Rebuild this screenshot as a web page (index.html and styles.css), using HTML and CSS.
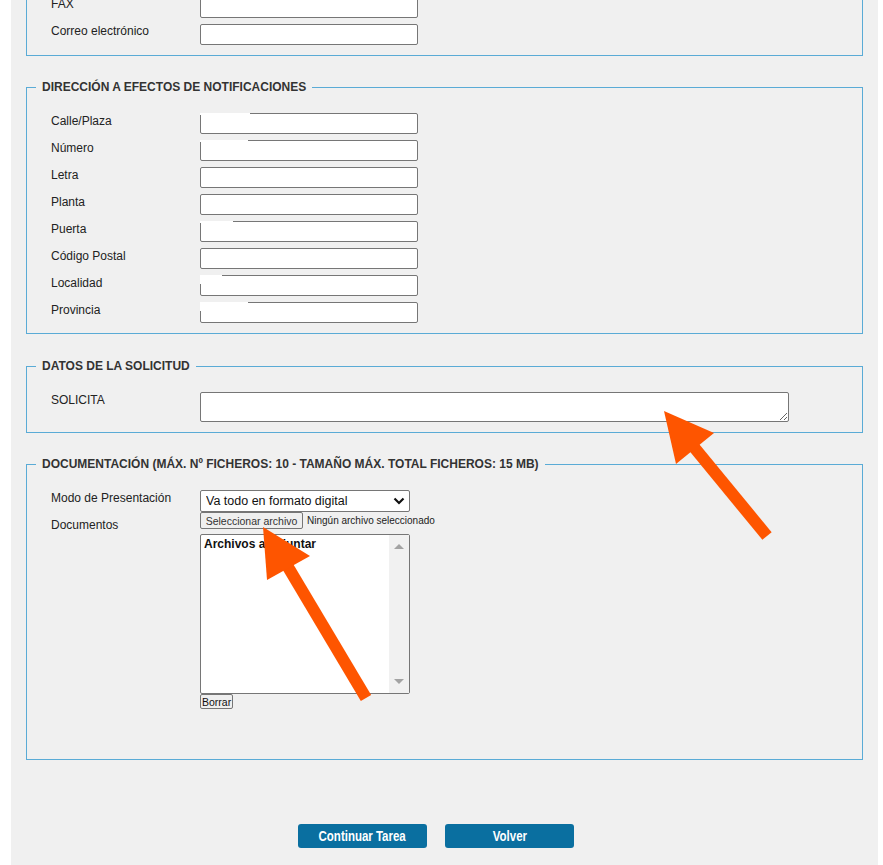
FILE: index.html
```html
<!DOCTYPE html>
<html lang="es">
<head>
<meta charset="utf-8">
<title>Solicitud</title>
<link rel="stylesheet" href="styles.css">
</head>
<body>
<div class="wrap">
  <div class="page">
    <fieldset class="box box-top">
      <div class="rows">
        <div class="row first"><label class="lbl lbl-top">FAX</label><input class="txt" type="text"></div>
        <div class="row"><label class="lbl lbl-top">Correo electrónico</label><input class="txt" type="text"></div>
      </div>
    </fieldset>

    <fieldset class="box">
      <legend class="leg">DIRECCIÓN A EFECTOS DE NOTIFICACIONES</legend>
      <div class="rows">
        <div class="row"><label class="lbl">Calle/Plaza</label><span class="field r50"><input class="txt" type="text"></span></div>
        <div class="row"><label class="lbl">Número</label><span class="field r48"><input class="txt" type="text"></span></div>
        <div class="row"><label class="lbl">Letra</label><span class="field"><input class="txt" type="text"></span></div>
        <div class="row"><label class="lbl">Planta</label><span class="field"><input class="txt" type="text"></span></div>
        <div class="row"><label class="lbl">Puerta</label><span class="field r33"><input class="txt" type="text"></span></div>
        <div class="row"><label class="lbl">Código Postal</label><span class="field"><input class="txt" type="text"></span></div>
        <div class="row"><label class="lbl">Localidad</label><span class="field r22 rl"><input class="txt" type="text"></span></div>
        <div class="row"><label class="lbl">Provincia</label><span class="field r48 rl"><input class="txt" type="text"></span></div>
      </div>
    </fieldset>

    <fieldset class="box box-gap">
      <legend class="leg">DATOS DE LA SOLICITUD</legend>
      <div class="rows">
        <div class="row row-auto"><label class="lbl">SOLICITA</label><textarea class="area"></textarea></div>
      </div>
    </fieldset>

    <fieldset class="box">
      <legend class="leg">DOCUMENTACIÓN (MÁX. Nº FICHEROS: 10 - TAMAÑO MÁX. TOTAL FICHEROS: 15 MB)</legend>
      <div class="rows rows-doc">
        <div class="row row-auto"><label class="lbl">Modo de Presentación</label>
          <span class="selwrap">
            <select class="sel"><option>Va todo en formato digital</option></select>
            <svg class="chev" width="12" height="8" viewBox="0 0 12 8" aria-hidden="true"><polyline points="1.5,1.5 6,6 10.5,1.5" fill="none" stroke="#111" stroke-width="2.2"/></svg>
          </span>
        </div>
        <div class="row row-auto row-docs"><label class="lbl lbl-docs">Documentos</label>
          <div class="docs">
            <div class="file"><button class="filebtn" type="button">Seleccionar archivo</button><span class="filetxt">Ningún archivo seleccionado</span></div>
            <div class="listbox">
              <div class="list-content">Archivos a adjuntar</div>
              <div class="sb"><span class="sb-up"></span><span class="sb-down"></span></div>
            </div>
            <button class="smallbtn" type="button">Borrar</button>
          </div>
        </div>
      </div>
    </fieldset>

    <div class="actions">
      <button class="btn" type="button"><span class="btn-txt">Continuar Tarea</span></button>
      <button class="btn" type="button"><span class="btn-txt">Volver</span></button>
    </div>
  </div>

  <svg class="overlay" width="883" height="865" viewBox="0 0 883 865" aria-hidden="true">
    <line x1="693" y1="446" x2="767" y2="536" stroke="#fe5500" stroke-width="12"/>
    <polygon points="664,411 714,433 676,464" fill="#fe5500"/>
    <line x1="288" y1="567" x2="366" y2="698" stroke="#fe5500" stroke-width="12"/>
    <polygon points="263,527 310,556 267,580" fill="#fe5500"/>
  </svg>
</div>
</body>
</html>
```
FILE: styles.css
```css
html, body {
  margin: 0;
  padding: 0;
  background: #ffffff;
}
body {
  font-family: "Liberation Sans", Arial, sans-serif;
  font-size: 12px;
  color: #222;
}
.wrap {
  position: relative;
  width: 883px;
  height: 865px;
  overflow: hidden;
}
.page {
  margin-left: 11px;
  width: 867px;
  min-height: 865px;
  background: #f0f0f0;
  box-sizing: border-box;
  padding-top: 0;
}
.box {
  margin: 24px 15px 0 15px;
  padding: 0;
  border: 1px solid #5aabd6;
  min-width: 0;
}
.box-gap {
  margin-top: 25px;
}
.box-top {
  margin-top: 0;
  border-top: 0;
}
.leg {
  margin-left: 9px;
  padding: 0 6px;
  font-weight: bold;
  font-size: 12px;
  color: #333;
  line-height: 14px;
}
.rows {
  padding: 19px 0 10px 24px;
}
.box-top .rows {
  padding-top: 0;
}
.row {
  display: flex;
  align-items: flex-start;
  height: 21px;
  margin-bottom: 6px;
}
.row:last-child {
  margin-bottom: 0;
}
.row.first {
  margin-top: -3px;
}
.row-auto {
  height: auto;
}
.lbl {
  width: 149px;
  flex: none;
  padding-top: 1px;
  line-height: 14px;
  font-size: 12px;
  color: #222;
}
.lbl-top {
  padding-top: 0;
}
.txt {
  box-sizing: border-box;
  width: 218px;
  height: 21px;
  margin: 0;
  border: 1px solid #767676;
  border-radius: 2px;
  background: #fff;
  padding: 1px 2px;
  font: 12px "Liberation Sans", Arial, sans-serif;
  display: block;
}
.field {
  position: relative;
  display: block;
}
.field::before {
  content: "";
  position: absolute;
  left: 0;
  top: 0;
  height: 2px;
  width: 0;
  background: #fff;
}
.field.rl::before {
  height: 9px;
}
.r50::before { width: 50px; }
.r48::before { width: 48px; }
.r33::before { width: 33px; }
.r22::before { width: 22px; }
.area {
  box-sizing: border-box;
  width: 589px;
  height: 30px;
  margin: 0;
  border: 1px solid #767676;
  border-radius: 2px;
  background: #fff;
  font: 12px "Liberation Sans", Arial, sans-serif;
  display: block;
}
.selwrap {
  position: relative;
  display: block;
  width: 210px;
  height: 22px;
}
.sel {
  -webkit-appearance: none;
  appearance: none;
  box-sizing: border-box;
  width: 210px;
  height: 22px;
  margin: 0;
  padding: 0 20px 0 5px;
  font: 12.5px "Liberation Sans", Arial, sans-serif;
  color: #111;
  border: 1px solid #767676;
  border-radius: 2px;
  background: #fff;
  display: block;
}
.chev {
  position: absolute;
  right: 5px;
  top: 7px;
  pointer-events: none;
}
.rows-doc {
  padding-top: 19px;
  padding-bottom: 50px;
}
.row-docs {
  margin-bottom: 0;
  margin-top: -6px;
}
.lbl-docs {
  margin-top: 5px;
}
.docs {
  display: flex;
  flex-direction: column;
  align-items: flex-start;
}
.file {
  display: flex;
  align-items: center;
  height: 17px;
}
.filebtn {
  box-sizing: border-box;
  height: 17px;
  width: 103px;
  margin: 0;
  padding: 0;
  border: 1px solid #767676;
  border-radius: 2px;
  background: #efefef;
  color: #333;
  font: 10.5px "Liberation Sans", Arial, sans-serif;
}
.filetxt {
  margin-left: 4px;
  font-size: 10px;
  color: #222;
}
.listbox {
  box-sizing: border-box;
  width: 210px;
  height: 160px;
  margin-top: 5px;
  border: 1px solid #767676;
  border-radius: 2px;
  background: #fff;
  display: flex;
}
.list-content {
  flex: 1;
  padding: 2px 3px;
  font-weight: bold;
  font-size: 12px;
  color: #111;
}
.sb {
  width: 20px;
  background: #f1f1f1;
  display: flex;
  flex-direction: column;
  justify-content: space-between;
  align-items: center;
  padding: 9px 0 9px 0;
}
.sb-up, .sb-down {
  width: 0;
  height: 0;
  border-left: 5px solid transparent;
  border-right: 5px solid transparent;
}
.sb-up { border-bottom: 5px solid #a3a3a3; }
.sb-down { border-top: 5px solid #a3a3a3; }
.smallbtn {
  box-sizing: border-box;
  height: 15px;
  margin: 0;
  padding: 0 1px;
  border: 1px solid #767676;
  border-radius: 2px;
  background: #efefef;
  color: #111;
  font: 10.5px "Liberation Sans", Arial, sans-serif;
  line-height: 12px;
}
.actions {
  display: flex;
  justify-content: center;
  gap: 18px;
  margin-top: 64px;
  padding-right: 17px;
}
.btn {
  width: 129px;
  height: 24px;
  margin: 0;
  padding: 0;
  border: 0;
  border-radius: 3px;
  background: #0a6fa0;
  color: #fff;
  font: bold 14px "Liberation Sans", Arial, sans-serif;
}
.btn-txt {
  display: inline-block;
  transform: scaleX(0.82);
}
.overlay {
  position: absolute;
  left: 0;
  top: 0;
  pointer-events: none;
}
```
